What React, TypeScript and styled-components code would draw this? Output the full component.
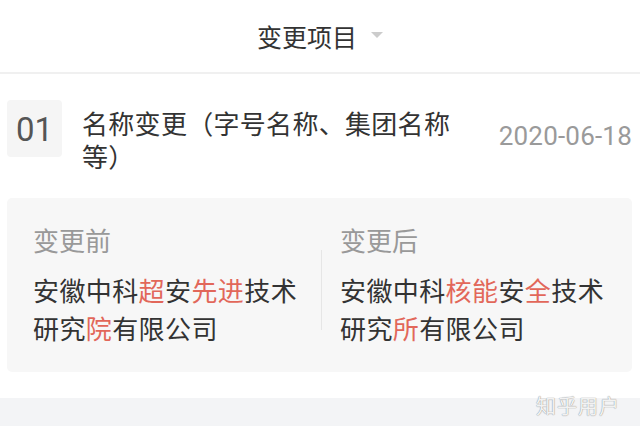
import styled, { createGlobalStyle } from "styled-components";

// ── globals ───────────────────────────────────────────────────────────────────

const GlobalStyle = createGlobalStyle`
  html, body {
    margin: 0;
    padding: 0;
    background: #ffffff;
  }
  body {
    font-family: "Noto Sans CJK SC", "Noto Sans", sans-serif;
    color: #333333;
  }
`;

const Page = styled.div`
  position: relative;
  width: 640px;
  height: 426px;
  overflow: hidden;
  display: flex;
  flex-direction: column;
`;

// ── header ────────────────────────────────────────────────────────────────────

const Header = styled.div`
  height: 72px;
  display: flex;
  align-items: center;
  justify-content: center;
  border-bottom: 2px solid #f0f0f0;
  font-size: 25px;
  color: #333;
`;

const Caret = styled.span`
  width: 0;
  height: 0;
  margin-left: 14px;
  margin-top: -2px;
  border-left: 6px solid transparent;
  border-right: 6px solid transparent;
  border-top: 6px solid #cccccc;
`;

// ── item ──────────────────────────────────────────────────────────────────────

const Item = styled.div`
  padding: 26px 8px 0 7px;
`;

const ItemRow = styled.div`
  display: flex;
  align-items: flex-start;
`;

const Index = styled.div`
  flex: none;
  width: 55px;
  height: 57px;
  border-radius: 4px;
  background: #f5f5f5;
  display: flex;
  align-items: center;
  justify-content: center;
  font-family: Roboto, "Liberation Sans", sans-serif;
  font-size: 33px;
  color: #555;
  padding-top: 2px;
  box-sizing: border-box;
`;

const Title = styled.div`
  flex: none;
  width: 375px;
  margin: 6px 0 0 20px;
  font-size: 26px;
  line-height: 33px;
  letter-spacing: 0.3px;
  color: #333;
`;

const Date = styled.div`
  margin-left: auto;
  align-self: center;
  font-family: Roboto, "Liberation Sans", sans-serif;
  font-size: 26px;
  color: #9a9a9a;
  letter-spacing: 0.2px;
`;

// ── compare card ──────────────────────────────────────────────────────────────

const Card = styled.div`
  margin-top: 26px;
  height: 174px;
  box-sizing: border-box;
  border-radius: 5px;
  background: #f7f7f7;
  padding: 26px 0 0 26px;
  display: grid;
  grid-template-columns: 288px 1px 1fr;
`;

const Column = styled.div<{ $right?: boolean }>`
  padding-left: ${(p) => (p.$right ? "18px" : "0")};
`;

const Rule = styled.div`
  width: 1px;
  height: 80px;
  margin-top: 26px;
  background: #e6e6e6;
`;

const Label = styled.div`
  font-size: 26px;
  line-height: 32px;
  color: #999;
`;

const Value = styled.div`
  margin-top: 15px;
  font-size: 26px;
  line-height: 38px;
  letter-spacing: 0.4px;
  color: #333;
`;

const Mark = styled.span`
  color: #e2675a;
`;

// ── footer ────────────────────────────────────────────────────────────────────

const Band = styled.div`
  margin-top: 26px;
  flex: 1;
  background: #f3f4f6;
`;

const Watermark = styled.div`
  position: absolute;
  right: 20px;
  bottom: 6px;
  font-size: 20px;
  letter-spacing: 1px;
  color: rgba(255, 255, 255, 0.9);
  text-shadow:
    0 0 1px #9a9a9a,
    0 0 1px #9a9a9a;
`;

export default function App() {
  return (
    <Page>
      <GlobalStyle />
      <Header>
        变更项目
        <Caret />
      </Header>

      <Item>
        <ItemRow>
          <Index>01</Index>
          <Title>名称变更（字号名称、集团名称等）</Title>
          <Date>2020-06-18</Date>
        </ItemRow>

        <Card>
          <Column>
            <Label>变更前</Label>
            <Value>
              安徽中科<Mark>超</Mark>安<Mark>先进</Mark>技术
              <br />
              研究<Mark>院</Mark>有限公司
            </Value>
          </Column>
          <Rule />
          <Column $right>
            <Label>变更后</Label>
            <Value>
              安徽中科<Mark>核能</Mark>安<Mark>全</Mark>技术
              <br />
              研究<Mark>所</Mark>有限公司
            </Value>
          </Column>
        </Card>
      </Item>

      <Band />
      <Watermark>知乎用户</Watermark>
    </Page>
  );
}
